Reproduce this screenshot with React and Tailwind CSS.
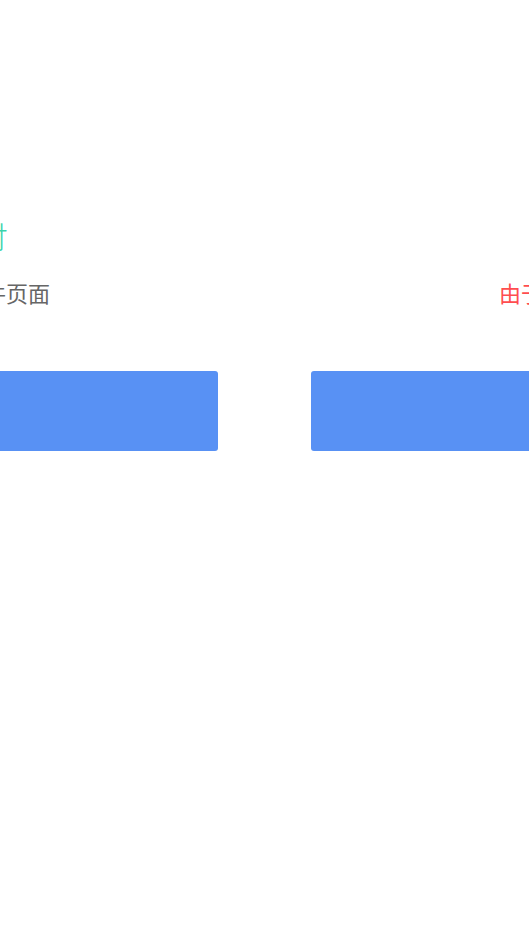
import React from 'react'

const font = { fontFamily: '"Noto Sans", "Noto Sans CJK SC", sans-serif' }

export default function App() {
  return (
    <div className="w-full h-[952px] bg-white overflow-hidden" style={font}>
      <div className="flex gap-[93px] pt-[216px] -ml-[182px]">
        {/* left panel */}
        <div className="w-[400px] shrink-0 flex flex-col">
          <div className="flex justify-end pr-[210px] h-[42px] items-center">
            <span className="text-[30px] leading-[42px] font-light text-[#3ad3ab] whitespace-nowrap">支付</span>
          </div>
          <div className="flex justify-end pr-[168px] mt-[20px] h-[30px] items-center">
            <span className="text-[22px] leading-[30px] text-[#666666] whitespace-nowrap">条件页面</span>
          </div>
          <button className="mt-[63px] h-[80px] w-full rounded-[3px] bg-[#5891f4]" />
        </div>

        {/* right panel */}
        <div className="w-[400px] shrink-0 flex flex-col">
          <div className="h-[42px]" />
          <div className="flex pl-[188px] mt-[20px] h-[30px] items-center">
            <span className="text-[22px] leading-[30px] text-[#ff4d4f] whitespace-nowrap">由于网络原因</span>
          </div>
          <button className="mt-[63px] h-[80px] w-full rounded-[3px] bg-[#5891f4]" />
        </div>
      </div>
    </div>
  )
}
